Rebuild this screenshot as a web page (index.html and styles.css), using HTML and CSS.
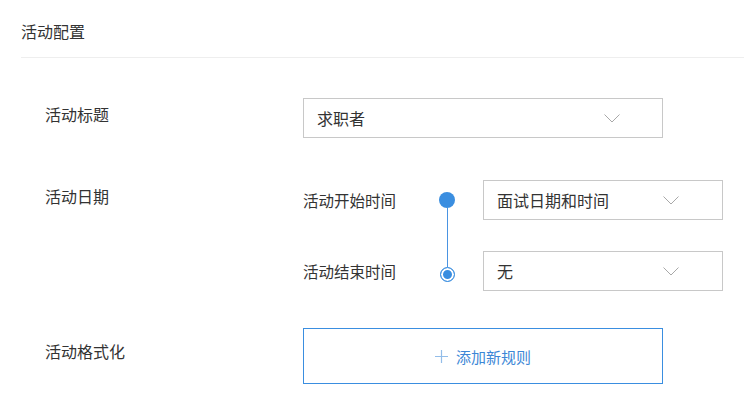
FILE: index.html
```html
<!DOCTYPE html>
<html lang="zh">
<head>
<meta charset="utf-8">
<link rel="stylesheet" href="styles.css">
</head>
<body>
<div class="page">
  <div class="header">活动配置</div>
  <div class="form">
    <div class="row row-title">
      <div class="label">活动标题</div>
      <div class="select select-wide">
        <span class="value">求职者</span>
        <svg class="chev" width="16" height="9" viewBox="0 0 16 9"><path d="M0.5 0.5 L8 8 L15.5 0.5" fill="none" stroke="#a8a8a8" stroke-width="1"/></svg>
      </div>
    </div>
    <div class="row row-date">
      <div class="label">活动日期</div>
      <div class="dates">
        <div class="sublabels">
          <div class="sublabel">活动开始时间</div>
          <div class="sublabel">活动结束时间</div>
        </div>
        <div class="timeline">
          <span class="dot dot-start"></span>
          <span class="line"></span>
          <span class="dot dot-end"></span>
        </div>
        <div class="selects">
          <div class="select select-narrow">
            <span class="value">面试日期和时间</span>
            <svg class="chev" width="16" height="9" viewBox="0 0 16 9"><path d="M0.5 0.5 L8 8 L15.5 0.5" fill="none" stroke="#a8a8a8" stroke-width="1"/></svg>
          </div>
          <div class="select select-narrow">
            <span class="value">无</span>
            <svg class="chev" width="16" height="9" viewBox="0 0 16 9"><path d="M0.5 0.5 L8 8 L15.5 0.5" fill="none" stroke="#a8a8a8" stroke-width="1"/></svg>
          </div>
        </div>
      </div>
    </div>
    <div class="row row-format">
      <div class="label">活动格式化</div>
      <button class="add-btn"><svg class="plus" width="13" height="13" viewBox="0 0 13 13"><path d="M6.5 0 V13 M0 6.5 H13" stroke="#93bde9" stroke-width="1.2" fill="none"/></svg>添加新规则</button>
    </div>
  </div>
</div>
</body>
</html>
```

FILE: styles.css
```css
* { box-sizing: border-box; }
html, body { margin: 0; padding: 0; background: #fff; }
body {
  font-family: "Noto Sans CJK SC", "Noto Sans", sans-serif;
  color: #333;
}
.page { padding-left: 21px; }
.header {
  font-size: 16px;
  line-height: 20px;
  padding-top: 21px;
  padding-bottom: 16px;
  border-bottom: 1px solid #eeeeee;
  color: #333;
}
.form { padding-left: 24px; padding-top: 40px; }
.row { display: flex; }
.label {
  width: 258px;
  font-size: 16px;
  line-height: 20px;
  color: #333;
  flex-shrink: 0;
}
.row-title .label { padding-top: 6px; }
.select {
  height: 40px;
  border: 1px solid #c8c8c8;
  display: flex;
  align-items: center;
  justify-content: space-between;
  padding-left: 13px;
  font-size: 16px;
}
.select .value { line-height: 20px; color: #333; }
.chev { display: block; }
.select-wide { width: 360px; padding-right: 42px; }
.select-narrow { width: 240px; padding-right: 43px; }
.row-date { margin-top: 42px; }
.row-date .label { padding-top: 6px; }
.dates { display: flex; }
.sublabels {
  width: 122px;
  display: flex;
  flex-direction: column;
  gap: 51px;
  padding-top: 10px;
}
.sublabel { font-size: 15.5px; line-height: 20px; color: #333; }
.timeline {
  width: 44px;
  margin-right: 14px;
  display: flex;
  flex-direction: column;
  align-items: center;
  padding-top: 12px;
}
.dot { display: block; border-radius: 50%; flex-shrink: 0; }
.dot-start { width: 16px; height: 16px; background: #3a8ee0; }
.line { width: 1px; height: 59px; background: #4a94e2; }
.dot-end {
  width: 15px; height: 15px;
  border: 1px solid #3a8ee0;
  background: #3a8ee0;
  box-shadow: inset 0 0 0 2px #fff;
}
.selects { display: flex; flex-direction: column; gap: 31px; }
.row-format { margin-top: 37px; }
.row-format .label { padding-top: 13px; }
.add-btn {
  width: 360px;
  height: 56px;
  border: 1px solid #3a8ee0;
  background: #fff;
  color: #3d87d6;
  font-family: "Noto Sans CJK SC", "Noto Sans", sans-serif;
  font-size: 15px;
  display: flex;
  align-items: center;
  justify-content: center;
  padding: 0;
  cursor: pointer;
}
.plus { display: block; margin-right: 8px; }
```
